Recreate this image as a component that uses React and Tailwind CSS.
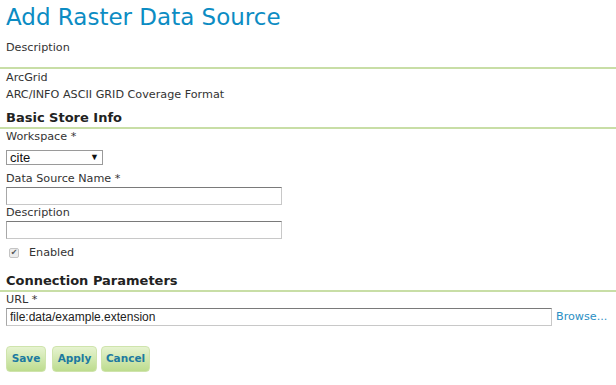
const labelFont = { fontFamily: "'DejaVu Sans', Verdana, sans-serif" };

function Label({ children, className = "" }) {
  return <div className={`text-[11.2px] leading-[15px] text-[#333] ${className}`}>{children}</div>;
}

function TextInput({ width, value = "", className = "" }) {
  return (
    <input
      readOnly
      value={value}
      className={`block ${width} h-[18px] border border-[#c8c8c8] border-t-[#7a7a7a] border-l-[#a8a8a8] bg-white px-[3px] text-[12px] leading-[16px] text-[#222] outline-none font-['Liberation_Sans',Arial,sans-serif] ${className}`}
    />
  );
}

function SectionTitle({ children, className = "" }) {
  return (
    <div className={className}>
      <h2 className="pl-[6px] text-[13px] font-bold leading-[18px] text-[#222]">{children}</h2>
      <div className="h-[2px] bg-[#c8dea6]" />
    </div>
  );
}

function GreenButton({ children, width }) {
  return (
    <button
      className={`${width} h-[26px] rounded-[4px] border border-[#cfe4ac] bg-gradient-to-b from-[#e6f3d0] to-[#bddc8e] text-[10.5px] font-bold text-[#1d7aa0]`}
    >
      {children}
    </button>
  );
}

export default function App() {
  return (
    <div className="min-h-screen bg-white" style={labelFont}>
      <div className="pl-[6px] pt-[2px]">
        <h1 className="text-[23px] leading-[30px] text-[#0c8cc3]">Add Raster Data Source</h1>
        <Label className="mt-[8px] leading-[16px]">Description</Label>
      </div>
      <div className="mt-[11px] h-[2px] bg-[#c8dea6]" />
      <div className="pl-[6px] text-[11.2px] leading-[17px] text-[#333]">
        <div>ArcGrid</div>
        <div>ARC/INFO ASCII GRID Coverage Format</div>
      </div>

      <SectionTitle className="mt-[6px]">Basic Store Info</SectionTitle>

      <div className="pl-[6px]">
        <Label>Workspace *</Label>
        <div className="mt-[6px] flex h-[15px] w-[97px] items-center justify-between border border-[#9a9a9a] bg-white pl-[3px] pr-[3px] text-[13px] leading-[13px] text-[#111] font-['Liberation_Sans',Arial,sans-serif]">
          <span>cite</span>
          <span className="text-[9px]">▼</span>
        </div>
        <Label className="mt-[6px]">Data Source Name *</Label>
        <TextInput width="w-[276px]" className="mt-[1px]" />
        <Label>Description</Label>
        <TextInput width="w-[276px]" className="mt-[1px]" />
        <label className="mt-[6px] flex h-[16px] items-center text-[11.2px] text-[#333]">
          <span className="ml-[3px] flex h-[10px] w-[10px] items-center justify-center rounded-[2px] border border-[#c4c4c4] bg-[#ececec] text-[8px] leading-none text-[#555]">
            ✔
          </span>
          <span className="ml-[10px]">Enabled</span>
        </label>
      </div>

      <SectionTitle className="mt-[11px]">Connection Parameters</SectionTitle>

      <div className="pl-[6px]">
        <Label>URL *</Label>
        <div className="mt-[1px] flex items-center">
          <TextInput width="w-[546px]" value="file:data/example.extension" />
          <span className="ml-[4px] text-[11.2px] text-[#2b8fc4]">Browse...</span>
        </div>
        <div className="mt-[20px] flex">
          <GreenButton width="w-[40px]">Save</GreenButton>
          <div className="w-[6px]" />
          <GreenButton width="w-[45px]">Apply</GreenButton>
          <div className="w-[4px]" />
          <GreenButton width="w-[49px]">Cancel</GreenButton>
        </div>
      </div>
    </div>
  );
}
